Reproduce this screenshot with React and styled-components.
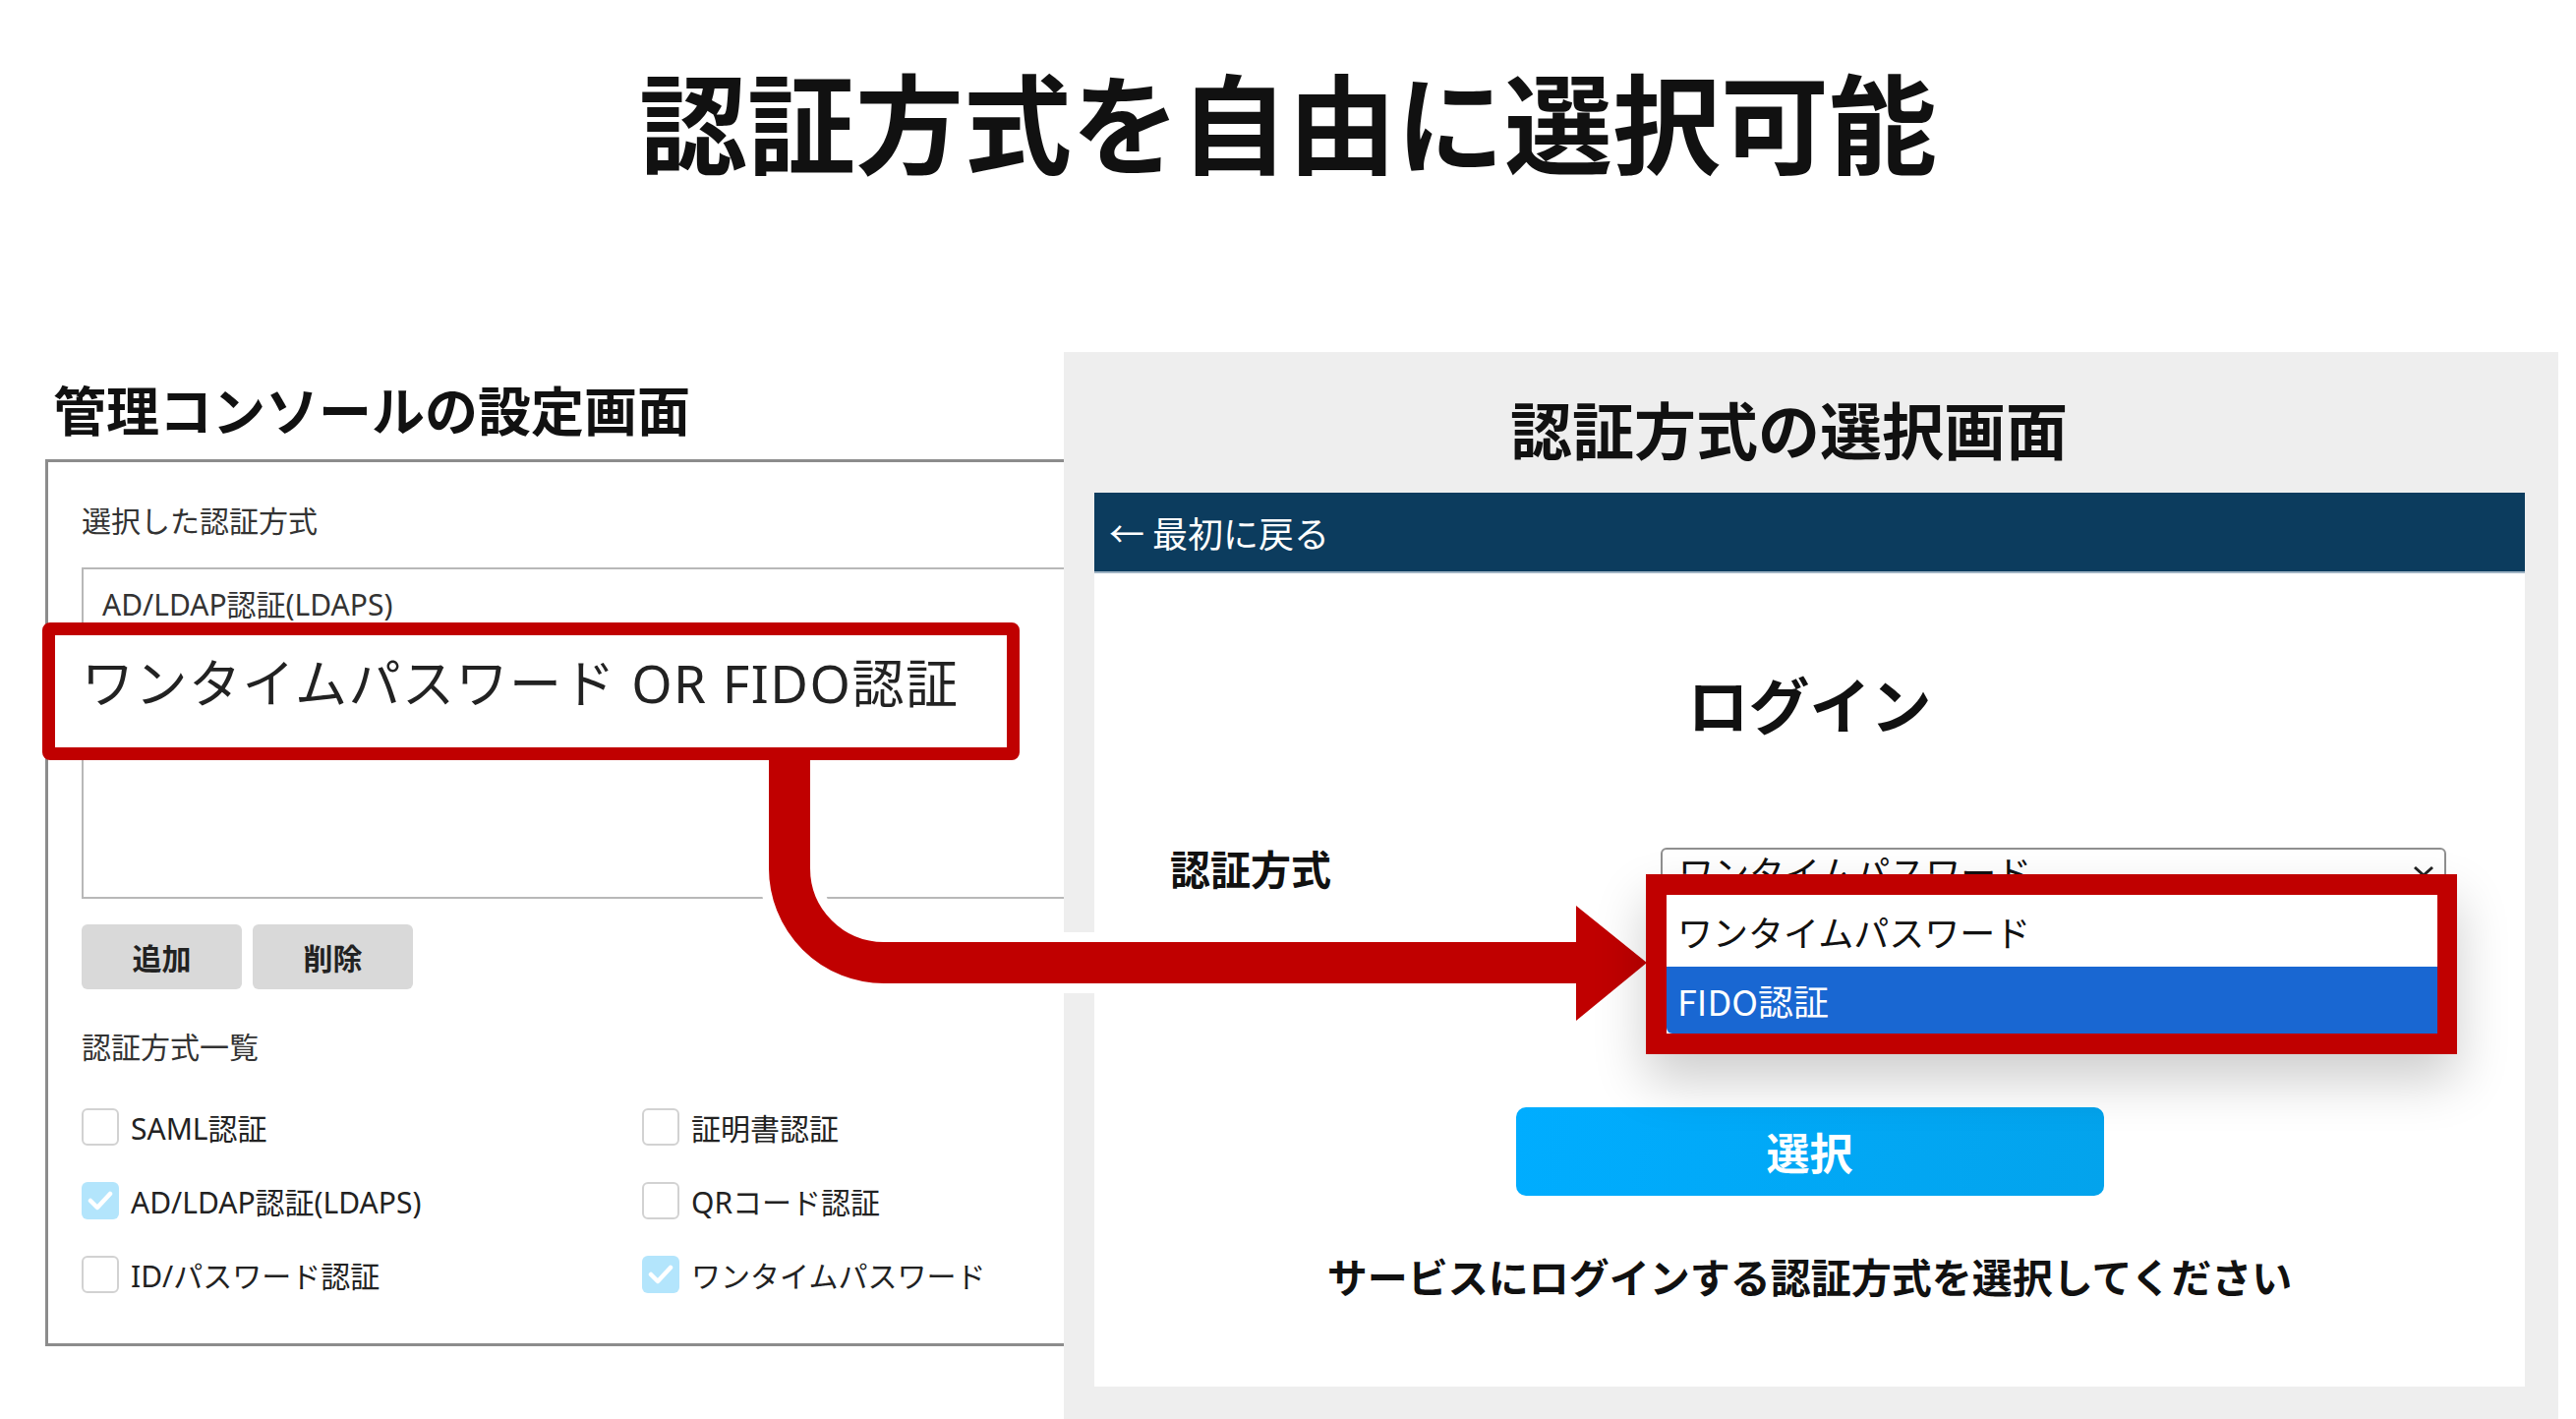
import React from "react";
import styled, { createGlobalStyle } from "styled-components";

const GlobalStyle = createGlobalStyle`
  html, body {
    margin: 0;
    padding: 0;
    background: #ffffff;
  }
  body {
    font-family: "Noto Sans CJK JP", "Noto Sans", sans-serif;
    color: #111111;
  }
  * {
    box-sizing: border-box;
  }
`;

const latinFirst = `"Noto Sans", "Noto Sans CJK JP", sans-serif`;

const Page = styled.div`
  position: relative;
  width: 2620px;
  height: 1443px;
  overflow: hidden;
  background: #ffffff;
  display: flex;
  flex-direction: column;
`;

const Title = styled.h1`
  margin: 0;
  height: 358px;
  padding-top: 66px;
  text-align: center;
  font-size: 110px;
  line-height: 110px;
  font-weight: 700;
  color: #111111;
`;

const Main = styled.div`
  flex: 1;
  display: flex;
`;

/* ---------- left: admin console ---------- */

const LeftColumn = styled.section`
  position: relative;
  width: 1082px;
  overflow: hidden;
  padding: 31px 0 0 46px;
`;

const SectionHeading = styled.h2`
  margin: 0 0 24px 8px;
  font-size: 54px;
  line-height: 54px;
  font-weight: 700;
  color: #111111;
`;

const SettingsBox = styled.div`
  width: 1100px;
  height: 902px;
  border: 3px solid #8c8c8c;
  border-right: none;
  padding: 45px 0 0 34px;
  color: #333333;
  font-family: ${latinFirst};
`;

const FieldLabel = styled.div`
  font-size: 30px;
  line-height: 30px;
  margin-bottom: 32px;
  margin-top: ${(p) => p.$top || 0}px;
`;

const ListBox = styled.div`
  height: 337px;
  border: 2px solid #b8b8b8;
  border-right: none;
  padding: 19px 0 0 19px;
  font-size: 30px;
  line-height: 34px;
`;

const ButtonRow = styled.div`
  display: flex;
  gap: 11px;
  margin-top: 26px;
`;

const GrayButton = styled.button`
  width: 163px;
  height: 66px;
  border: none;
  border-radius: 6px;
  background: #d9d9d9;
  font-family: "Noto Sans CJK JP", sans-serif;
  font-size: 30px;
  font-weight: 700;
  color: #222222;
`;

const CheckGrid = styled.div`
  display: grid;
  grid-template-columns: 570px auto;
  row-gap: 37px;
  margin-top: 47px;
`;

const CheckItem = styled.label`
  display: flex;
  align-items: center;
  gap: 12px;
  height: 38px;
  font-size: 30px;
  color: #222222;
`;

const CheckBox = styled.span`
  width: 38px;
  height: 38px;
  border-radius: 6px;
  display: flex;
  align-items: center;
  justify-content: center;
  border: ${(p) => (p.$checked ? "none" : "2px solid #d2d2d2")};
  background: ${(p) => (p.$checked ? "#b3e5fc" : "#ffffff")};
`;

const Highlight = styled.div`
  position: absolute;
  left: 43px;
  top: 275px;
  width: 994px;
  height: 140px;
  border: 13px solid #c00000;
  border-radius: 8px;
  background: #ffffff;
  padding: 18px 0 0 27px;
  font-family: ${latinFirst};
  font-size: 53px;
  line-height: 62px;
  letter-spacing: 1.5px;
  color: #222222;
  white-space: nowrap;
`;

/* ---------- right: login screen ---------- */

const RightPanel = styled.section`
  width: 1520px;
  background: #eeeeee;
  padding: 46px 34px 0 31px;
  display: flex;
  flex-direction: column;
`;

const PanelHeading = styled.h2`
  margin: 0 0 35px;
  padding-right: 42px;
  text-align: center;
  font-size: 63px;
  line-height: 62px;
  font-weight: 700;
  color: #111111;
`;

const Card = styled.div`
  height: 909px;
  background: #ffffff;
  display: flex;
  flex-direction: column;
`;

const NavBar = styled.div`
  height: 82px;
  background: #0c3c5e;
  border-bottom: 2px solid #9fb4c4;
  display: flex;
  align-items: center;
  padding-left: 15px;
  color: #ffffff;
  font-size: 36px;
`;

const CardBody = styled.div`
  display: flex;
  flex-direction: column;
  align-items: center;
  padding-top: 100px;
`;

const LoginTitle = styled.h3`
  margin: 0;
  font-size: 62px;
  line-height: 64px;
  font-weight: 700;
  color: #111111;
`;

const FormRow = styled.div`
  align-self: stretch;
  display: flex;
  justify-content: space-between;
  align-items: flex-start;
  margin-top: 115px;
  padding: 0 80px 0 77px;
`;

const FormLabel = styled.div`
  font-size: 41px;
  line-height: 41px;
  font-weight: 700;
  color: #111111;
`;

const SelectWrap = styled.div`
  position: relative;
  width: 799px;
  height: 64px;
`;

const SelectBox = styled.div`
  height: 100%;
  border: 2px solid #8f8f8f;
  border-radius: 6px;
  padding: 2px 10px 0 16px;
  display: flex;
  justify-content: space-between;
  align-items: flex-start;
  font-size: 36px;
  line-height: 40px;
  color: #111111;
  > svg {
    margin-top: 14px;
  }
`;

const Dropdown = styled.div`
  position: absolute;
  left: -15px;
  top: 27px;
  width: 825px;
  height: 183px;
  z-index: 10;
  border: 21px solid #c00000;
  border-right-width: 20px;
  background: #ffffff;
  box-shadow: 0 26px 50px rgba(0, 0, 0, 0.2);
`;

const Option = styled.div`
  height: ${(p) => p.$h}px;
  display: flex;
  align-items: center;
  padding-left: 11px;
  font-size: 36px;
  background: ${(p) => (p.$selected ? "#1967d2" : "#ffffff")};
  color: ${(p) => (p.$selected ? "#ffffff" : "#111111")};
  border-radius: ${(p) => (p.$selected ? "0 0 0 6px" : "0")};
`;

const SubmitButton = styled.button`
  margin-top: 200px;
  width: 598px;
  height: 90px;
  border: none;
  border-radius: 10px;
  background: linear-gradient(100deg, #00adff 0%, #03a3ec 100%);
  color: #ffffff;
  font-family: inherit;
  font-size: 44px;
  font-weight: 700;
`;

const Hint = styled.p`
  margin: 61px 0 0;
  font-size: 41px;
  line-height: 41px;
  font-weight: 700;
  color: #111111;
`;

const Annotation = styled.svg`
  position: absolute;
  left: 0;
  top: 0;
  z-index: 5;
  pointer-events: none;
`;

const Check = () => (
  <svg width="26" height="22" viewBox="0 0 26 22">
    <polyline
      points="3,11 10,18 23,4"
      fill="none"
      stroke="#ffffff"
      strokeWidth="4.5"
      strokeLinecap="round"
      strokeLinejoin="round"
    />
  </svg>
);

const methods = [
  { name: "SAML認証", checked: false },
  { name: "証明書認証", checked: false },
  { name: "AD/LDAP認証(LDAPS)", checked: true },
  { name: "QRコード認証", checked: false },
  { name: "ID/パスワード認証", checked: false },
  { name: "ワンタイムパスワード", checked: true },
];

const arrowPath = "M803 773 V883 A96 96 0 0 0 899 979 H1606";
const arrowHead = "1603,921 1675,979 1603,1038";

function App() {
  return (
    <Page>
      <GlobalStyle />
      <Title>認証方式を自由に選択可能</Title>
      <Main>
        <LeftColumn>
          <SectionHeading>管理コンソールの設定画面</SectionHeading>
          <SettingsBox>
            <FieldLabel>選択した認証方式</FieldLabel>
            <ListBox>AD/LDAP認証(LDAPS)</ListBox>
            <ButtonRow>
              <GrayButton>追加</GrayButton>
              <GrayButton>削除</GrayButton>
            </ButtonRow>
            <FieldLabel $top={44}>認証方式一覧</FieldLabel>
            <CheckGrid>
              {methods.map((m) => (
                <CheckItem key={m.name}>
                  <CheckBox $checked={m.checked}>
                    {m.checked && <Check />}
                  </CheckBox>
                  {m.name}
                </CheckItem>
              ))}
            </CheckGrid>
          </SettingsBox>
          <Highlight>ワンタイムパスワード OR FIDO認証</Highlight>
        </LeftColumn>

        <RightPanel>
          <PanelHeading>認証方式の選択画面</PanelHeading>
          <Card>
            <NavBar>← 最初に戻る</NavBar>
            <CardBody>
              <LoginTitle>ログイン</LoginTitle>
              <FormRow>
                <FormLabel>認証方式</FormLabel>
                <SelectWrap>
                  <SelectBox>
                    <span>ワンタイムパスワード</span>
                    <svg width="22" height="12" viewBox="0 0 22 12">
                      <polyline
                        points="2,2 11,10 20,2"
                        fill="none"
                        stroke="#222222"
                        strokeWidth="3"
                      />
                    </svg>
                  </SelectBox>
                  <Dropdown>
                    <Option $h={73}>ワンタイムパスワード</Option>
                    <Option $h={68} $selected>
                      FIDO認証
                    </Option>
                  </Dropdown>
                </SelectWrap>
              </FormRow>
              <SubmitButton>選択</SubmitButton>
              <Hint>サービスにログインする認証方式を選択してください</Hint>
            </CardBody>
          </Card>
        </RightPanel>
      </Main>

      <Annotation width="2620" height="1443" viewBox="0 0 2620 1443">
        <path d={arrowPath} fill="none" stroke="#ffffff" strokeWidth="62" />
        <polygon
          points={arrowHead}
          fill="#ffffff"
          stroke="#ffffff"
          strokeWidth="20"
          strokeLinejoin="miter"
        />
        <path d={arrowPath} fill="none" stroke="#c00000" strokeWidth="42" />
        <polygon points={arrowHead} fill="#c00000" />
      </Annotation>
    </Page>
  );
}

export default App;
